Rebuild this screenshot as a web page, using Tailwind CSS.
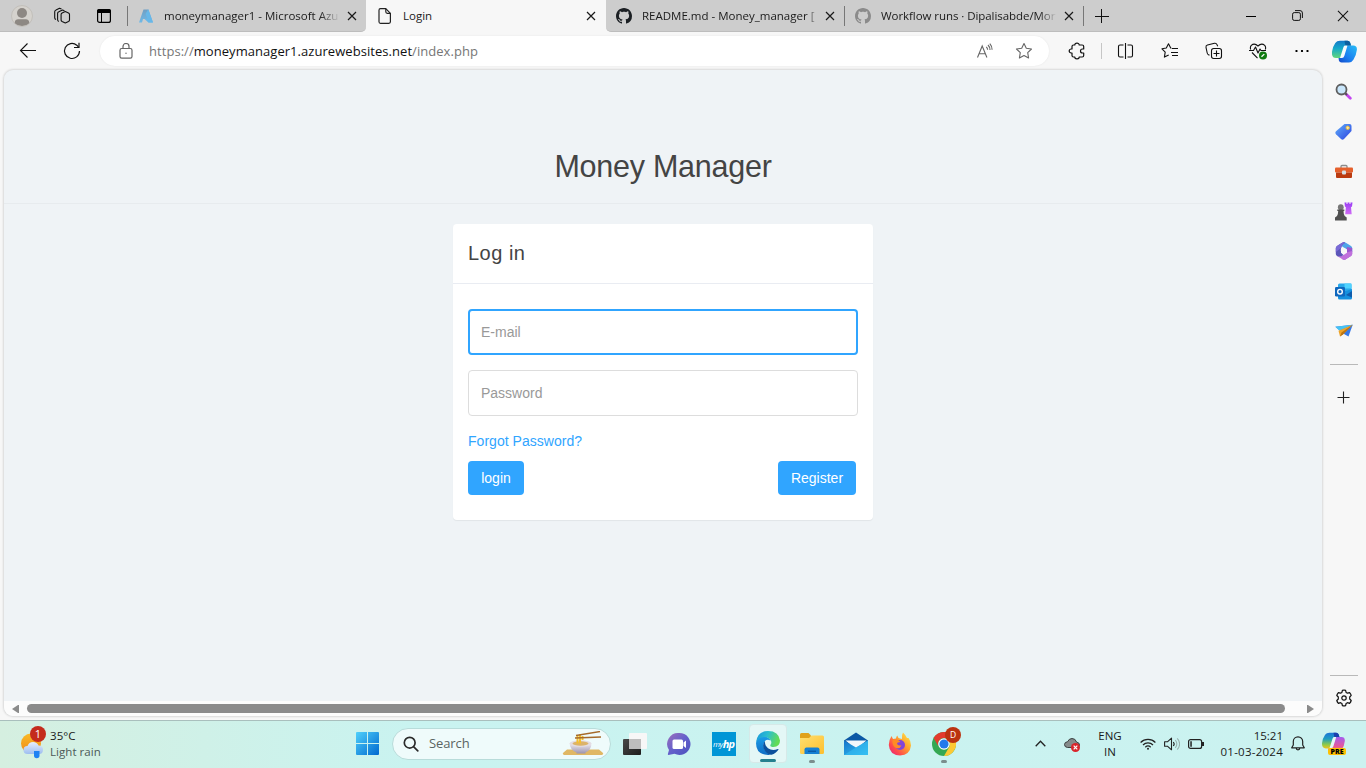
<!DOCTYPE html>
<html lang="en">
<head>
<meta charset="utf-8">
<title>Login</title>
<script src="https://cdn.jsdelivr.net/npm/@tailwindcss/browser@4"></script>
</head>
<body class="flex h-[768px] w-[1366px] flex-col overflow-hidden bg-[#f7f7f7] font-['Open_Sans','Noto_Sans',sans-serif] text-[#1a1a1a]">

<!-- Gradients shared by the icons -->
<svg class="absolute h-0 w-0" aria-hidden="true">
  <defs>
    <linearGradient id="azure" x1="0" y1="0" x2="0" y2="1"><stop offset="0" stop-color="#6f9fc4"/><stop offset="1" stop-color="#70b9e6"/></linearGradient>
    <linearGradient id="cpA" x1="0" y1="0" x2="0" y2="1"><stop offset="0" stop-color="#1478c8"/><stop offset=".45" stop-color="#15a9c9"/><stop offset="1" stop-color="#62d67c"/></linearGradient>
    <linearGradient id="cpB" x1="1" y1="0" x2="0" y2="1"><stop offset="0" stop-color="#28bdf6"/><stop offset=".6" stop-color="#1b7df0"/><stop offset="1" stop-color="#1249c8"/></linearGradient>
    <linearGradient id="pvA" x1="0" y1="0" x2="0" y2="1"><stop offset="0" stop-color="#1c73d8"/><stop offset=".4" stop-color="#1f9dc0"/><stop offset=".75" stop-color="#8cc94c"/><stop offset="1" stop-color="#f0c419"/></linearGradient>
    <linearGradient id="pvB" x1="0" y1="0" x2="0" y2="1"><stop offset="0" stop-color="#a45cf0"/><stop offset=".6" stop-color="#e6599b"/><stop offset="1" stop-color="#f79052"/></linearGradient>
    <linearGradient id="tag" x1="0" y1="0" x2="1" y2="1"><stop offset="0" stop-color="#62b0fa"/><stop offset="1" stop-color="#2b41e0"/></linearGradient>
    <linearGradient id="start" x1="0" y1="0" x2="1" y2="1"><stop offset="0" stop-color="#4fd0fb"/><stop offset="1" stop-color="#0068cf"/></linearGradient>
    <linearGradient id="chat" x1="0" y1="0" x2="1" y2="1"><stop offset="0" stop-color="#9d6fbc"/><stop offset=".5" stop-color="#6460cb"/><stop offset="1" stop-color="#4b50bd"/></linearGradient>
    <linearGradient id="edgeTop" x1="0" y1="0" x2="1" y2=".3"><stop offset="0" stop-color="#1793dd"/><stop offset=".5" stop-color="#2bbdd0"/><stop offset="1" stop-color="#63dc55"/></linearGradient>
    <linearGradient id="edgeLow" x1="0" y1="0" x2="0" y2="1"><stop offset="0" stop-color="#1b9de8"/><stop offset="1" stop-color="#0f6cc4"/></linearGradient>
    <linearGradient id="folder" x1="0" y1="0" x2="1" y2="1"><stop offset="0" stop-color="#ffdf71"/><stop offset="1" stop-color="#fdbf2d"/></linearGradient>
    <linearGradient id="mail" x1="0" y1="0" x2="1" y2="1"><stop offset="0" stop-color="#1573c9"/><stop offset="1" stop-color="#35c4f5"/></linearGradient>
    <linearGradient id="fox" x1="1" y1="0" x2="0" y2="1"><stop offset="0" stop-color="#fff24a"/><stop offset=".4" stop-color="#ffa32e"/><stop offset=".72" stop-color="#ff4a4c"/><stop offset="1" stop-color="#e01b87"/></linearGradient>
    <linearGradient id="sun" x1="0" y1="0" x2="0" y2="1"><stop offset="0" stop-color="#f9bb26"/><stop offset="1" stop-color="#ef8718"/></linearGradient>
    <linearGradient id="cloud" x1="0" y1="0" x2="0" y2="1"><stop offset="0" stop-color="#e6effd"/><stop offset="1" stop-color="#9dbdf0"/></linearGradient>
    <linearGradient id="dark" x1="0" y1="0" x2="1" y2="1"><stop offset="0" stop-color="#484848"/><stop offset="1" stop-color="#1d1d1d"/></linearGradient>
    <linearGradient id="purp" x1="0" y1="0" x2="0" y2="1"><stop offset="0" stop-color="#9b3df5"/><stop offset="1" stop-color="#d06cf4"/></linearGradient>
    <linearGradient id="bowl" x1="0" y1="0" x2="0" y2="1"><stop offset="0" stop-color="#f3f0f5"/><stop offset="1" stop-color="#9d93ad"/></linearGradient>
    <symbol id="cross" viewBox="0 0 10 10"><path d="M1 1l8 8M9 1l-8 8" fill="none" stroke="currentColor" stroke-width="1.2"/></symbol>
    <symbol id="github" viewBox="0 0 16 16"><path fill="currentColor" d="M8 0C3.58 0 0 3.58 0 8c0 3.54 2.29 6.53 5.47 7.59.4.07.55-.17.55-.38 0-.19-.01-.82-.01-1.49-2.01.37-2.53-.49-2.69-.94-.09-.23-.48-.94-.82-1.13-.28-.15-.68-.52-.01-.53.63-.01 1.08.58 1.23.82.72 1.21 1.87.87 2.33.66.07-.52.28-.87.51-1.07-1.78-.2-3.64-.89-3.64-3.95 0-.87.31-1.59.82-2.15-.08-.2-.36-1.02.08-2.12 0 0 .67-.21 2.2.82.64-.18 1.32-.27 2-.27s1.36.09 2 .27c1.53-1.04 2.2-.82 2.2-.82.44 1.1.16 1.92.08 2.12.51.56.82 1.27.82 2.15 0 3.07-1.87 3.75-3.65 3.95.29.25.54.73.54 1.48 0 1.07-.01 1.93-.01 2.2 0 .21.15.46.55.38A8.01 8.01 0 0 0 16 8c0-4.42-3.58-8-8-8z"/></symbol>
  </defs>
</svg>

<!-- Tab strip -->
<header class="flex h-8 shrink-0 bg-[#f7f7f7] text-[11.5px] leading-8">
  <div class="flex w-[366px] rounded-br-[5px] border-b border-[#bdbdbd] bg-[#cdcdcd]">
    <div class="flex w-11 items-center justify-center">
      <svg class="size-[22px]" viewBox="0 0 22 22"><circle cx="11" cy="11" r="10.5" fill="#d5d2cd" stroke="#c2bfba"/><circle cx="11" cy="8" r="5" fill="#8d8883"/><path d="M3.800 18.200c-.3-3 1.700-3.900 3.200-3.900h8c1.500 0 3.500.9 3.200 3.900a10.500 10.500 0 0 1-14.400 0z" fill="#8d8883"/></svg>
    </div>
    <div class="flex w-9 items-center justify-center">
      <svg class="size-[18px]" viewBox="0 0 18 18" fill="none" stroke="#111" stroke-width="1.1" stroke-linejoin="round"><path d="M12.300 4.500l3.200 1.500q1 .5 1 1.500v5.500q0 1-1 1.500l-3.200 1.500-3.200-1.500q-1-.5-1-1.500V7.500q0-1 1-1.500z"/><path d="M5.800 14.500q-1.200-.5-1.200-1.700V6.500q0-1.200 1.200-1.700L9.500 3l2 .8M3 12.500q-1.300-.5-1.300-1.800V4.800Q1.700 3.500 3 3l3.500-1.700 2 .8"/></svg>
    </div>
    <div class="flex w-12 items-center justify-center">
      <svg class="size-4" viewBox="0 0 16 16"><rect x="1.600" y="1.600" width="12.800" height="12.800" rx="2" fill="none" stroke="#000" stroke-width="1.200"/><path d="M1 5V3a2 2 0 0 1 2-2h10a2 2 0 0 1 2 2v2z"/><path d="M5.500 5v9" stroke="#000"/></svg>
    </div>
    <div class="mt-1.5 -ml-px h-5 w-px bg-[#777]"></div>
    <div class="flex w-[238px] items-center pl-2.5">
      <svg class="size-4" viewBox="0 0 16 16"><path d="M5.500 1.500h4.800L15 14.500h-4.500L9 11H5l-1 3.500H1z" fill="url(#azure)"/><path d="M10 1.500h.5L15 14.500h-4.600L6.500 11h3L7.500 6z" fill="#67b7e8"/></svg>
      <span class="ml-2.5 w-[176px] whitespace-nowrap mask-r-from-88% mask-r-to-100%">moneymanager1 - Microsoft Azu</span>
      <svg class="ml-[7px] size-2.5"><use href="#cross"/></svg>
    </div>
  </div>
  <div class="flex w-[240px] items-center rounded-t-[6px] bg-[#f7f7f7] pl-2.5">
    <svg class="ml-0.5 h-4 w-[14px]" viewBox="0 0 14 16" fill="none" stroke="#222" stroke-width="1.200" stroke-linejoin="round"><path d="M2.500.7h5.300L12.400 5.300v8.500q0 1.500-1.500 1.500H2.500Q1 15.300 1 13.800V2.200Q1 .7 2.500.7z"/><path d="M7.800.7v3.100q0 1.500 1.500 1.500h3.100"/></svg>
    <span class="ml-[11px] w-[182px]">Login</span>
    <svg class="ml-px size-2.5"><use href="#cross"/></svg>
  </div>
  <div class="flex flex-1 rounded-bl-[5px] border-b border-[#bdbdbd] bg-[#cdcdcd]">
    <div class="flex w-[239px] items-center pl-2.5">
      <svg class="size-4 text-[#1b1f23]"><use href="#github"/></svg>
      <span class="ml-2.5 w-[176px] whitespace-nowrap mask-r-from-94% mask-r-to-100%">README.md - Money_manager [</span>
      <svg class="ml-[7px] size-2.5"><use href="#cross"/></svg>
    </div>
    <div class="mt-1.5 -ml-px h-5 w-px bg-[#777]"></div>
    <div class="flex w-[238px] items-center pl-2.5">
      <svg class="size-4 text-[#8b8b8b]"><use href="#github"/></svg>
      <span class="ml-2.5 w-[176px] tracking-[-.06px] whitespace-nowrap mask-r-from-90% mask-r-to-100%">Workflow runs · Dipalisabde/Mor</span>
      <svg class="ml-[7px] size-2.5"><use href="#cross"/></svg>
    </div>
    <div class="mt-1.5 h-5 w-px bg-[#777]"></div>
    <div class="flex w-9 items-center justify-center">
      <svg class="size-[14px]" viewBox="0 0 14 14"><path d="M6.500 0v14M0 7.500h14" stroke="#111" stroke-width="1"/></svg>
    </div>
    <div class="ml-auto flex">
      <div class="flex w-[46px] items-center justify-center"><div class="mt-px h-px w-2.5 bg-black"></div></div>
      <div class="flex w-[46px] items-center justify-center"><svg class="size-[11px]" viewBox="0 0 11 11" fill="none" stroke="#111"><rect x=".6" y="2.600" width="7.800" height="7.800" rx="1.600"/><path d="M3 .6h5q2.400 0 2.400 2.400v5"/></svg></div>
      <div class="flex w-[46px] items-center justify-center"><svg class="size-[12px]" viewBox="0 0 10 10"><path d="M.8.8l8.400 8.400M9.200.8L.8 9.200" stroke="#111" stroke-width=".9"/></svg></div>
    </div>
  </div>
</header>

<!-- Toolbar -->
<nav class="flex h-[38px] shrink-0 items-center">
  <div class="flex w-14 justify-center"><svg class="size-[18px]" viewBox="0 0 18 18" fill="none" stroke="#111" stroke-width="1.100"><path d="M17 8.500H1.500M8.500 1.500l-7 7 7 7"/></svg></div>
  <div class="flex w-8 justify-center"><svg class="size-[18px]" viewBox="0 0 18 18" fill="none" stroke="#111" stroke-width="1.200"><path d="M16.500 9A7.500 7.500 0 1 1 13.800 3.200L15.500 5"/><path d="M16 .8V5.500h-5"/></svg></div>
  <div class="ml-3 flex h-[30px] w-[949px] items-center rounded-full bg-white pl-[18px] shadow-[0_0_2px_rgba(0,0,0,.08)]">
    <svg class="size-4" viewBox="0 0 16 16" fill="none" stroke="#666" stroke-width="1.200"><rect x="2" y="5.500" width="12" height="9.700" rx="1.700"/><path d="M5 5.500V3.500a3 3 0 0 1 6 0v2"/><circle cx="8" cy="10.300" r=".7" fill="#666" stroke="none"/></svg>
    <span class="ml-[15px] w-[827px] pt-px text-[13px] tracking-[.05px] text-[#767676]">https://<span class="text-[#111]">moneymanager1.azurewebsites.net</span>/index.php</span>
    <svg class="h-4 w-[18px]" viewBox="0 0 18 16" fill="none" stroke="#666" stroke-width="1.100"><path d="M1.500 14.500L6.200 3l4.700 11.500M3.200 10.700h6"/><path d="M10.300 3.800a4 4 0 0 1 1.300 3M12 2a6.500 6.500 0 0 1 2 5M13.800.7a9 9 0 0 1 2.300 6"/></svg>
    <svg class="ml-[21px] size-[18px]" viewBox="0 0 18 18" fill="none" stroke="#666" stroke-width="1.100" stroke-linejoin="round"><path d="M9 1.500l2.300 4.800 5.200.7-3.800 3.700.9 5.300L9 13.500 4.400 16l.9-5.300L1.500 7l5.200-.7z"/></svg>
  </div>
  <div class="ml-1.5 flex w-11 justify-center"><svg class="size-[18px]" viewBox="0 0 18 18" fill="none" stroke="#111" stroke-width="1.200" stroke-linejoin="round"><path d="M5.500 3h1.300a2.200 1.900 0 0 1 4.400 0h3q1.500 0 1.500 1.500V7h-1.200a2 2 0 0 0 0 4h1.200v2.500q0 1.500-1.500 1.500h-3a2.200 1.900 0 0 1-4.400 0H5.500Q4 15 4 13.500V11H3.200a2 2 0 0 1 0-4H4V4.500Q4 3 5.500 3z"/></svg></div>
  <div class="ml-0.5 h-4 w-px bg-[#c6c6c6]"></div>
  <div class="ml-0.5 flex w-11 justify-center"><svg class="size-[18px]" viewBox="0 0 18 18" fill="none" stroke="#111" stroke-width="1.100"><path d="M8.500 1v16M6.500 3H3Q1.500 3 1.500 4.600v8.800Q1.500 15 3 15h3.500M10.500 3H14q1.500 0 1.500 1.600v8.800q0 1.600-1.500 1.600h-3.500"/></svg></div>
  <div class="flex w-11 justify-center"><svg class="size-[18px]" viewBox="0 0 18 18" fill="none" stroke="#111" stroke-width="1.100" stroke-linejoin="round"><path d="M10.500 6.200L9.700 6 7.500 1.800 5.300 6 1 6.800l3.200 3.300-.8 5 4.300-2.200M11 6.500h6M10 10.500h7M11 13.500h6"/></svg></div>
  <div class="flex w-11 justify-center"><svg class="size-[18px]" viewBox="0 0 18 18" fill="none" stroke="#111" stroke-width="1.100" stroke-linejoin="round"><rect x="6.500" y="6.500" width="10" height="10" rx="2.200"/><path d="M11.500 8.500v6M8.500 11.500h6M4.500 13.300l-1-.5Q2.500 12.300 2.200 11L1 5.300Q.7 3.500 2.500 3l7-1.700q1.800-.3 2.500 1.300l.7 1.700"/></svg></div>
  <div class="flex w-11 justify-center"><svg class="size-[18px]" viewBox="0 0 18 18" fill="none" stroke="#111" stroke-width="1.100" stroke-linejoin="round"><path d="M1.700 7.500Q.8 5 2.300 3.300 5.500.5 9 4q3.500-3.500 6.700-.7Q17.200 5 16.300 7.500M3 10.500l5.500 5.700M0 8.500h4.500L6.500 5 9 11l2-4 1 1.500h5"/><circle cx="14" cy="13.500" r="4" fill="#0f7b10" stroke="none"/><path d="M12.500 14.800l2.800-2.700" stroke="#fff" stroke-width="1.300"/></svg></div>
  <div class="flex w-11 items-center justify-center"><svg class="h-0.5 w-[14px]" viewBox="0 0 14 2"><circle cx="1.500" cy="1" r="1.100"/><circle cx="7" cy="1" r="1.100"/><circle cx="12.500" cy="1" r="1.100"/></svg></div>
  <div class="flex w-[40px] justify-center"><svg class="h-[23px] w-[25px]" viewBox="0 0 25 23"><path d="M8 .7h7.500q2 0 2.700 2l.8 2.800h-2.500q-2 0-2.700 2l-2.700 8q-.8 2.500-3.300 2.500H4Q-.3 18-.1 12.500.5 7 3.300 3.100 4.800.7 8 .7z" fill="url(#cpA)"/><path d="M17 22.500H9.500q-2 0-2.600-2L6.500 18H8q2.300 0 3-2.300l2.600-8.200q.7-2 2.900-2h4.700q4 0 3.700 4.300-.6 5.700-3.500 10Q19.800 22.500 17 22.500z" fill="url(#cpB)"/><path d="M12.500.7h3q2 0 2.700 2l.8 2.800h-2.500q-2 0-2.700 2z" fill="#0c5f9f"/><path d="M11.500 7q.5-1.400 2-1.400h2L12.300 16q-.6 2-2.300 2H8z" fill="#f7fbfd"/></svg></div>
</nav>

<div class="flex h-[650px] shrink-0">
  <!-- Web page -->
  <main class="ml-1 flex h-[646px] w-[1318px] flex-col overflow-hidden rounded-[9px] bg-[#eff3f6] font-['Liberation_Sans',Arial,sans-serif] text-[#444] shadow-[0_0_2px_1px_rgba(0,0,0,.12)]">
    <div class="h-[631px] shrink-0">
      <h1 class="border-b border-[#e7ebee] pt-[79px] pb-[19px] text-center text-[30.500px] leading-[35px] tracking-[-.25px]">Money Manager</h1>
      <section class="mx-auto mt-5 h-[296px] w-[420px] rounded-[4px] bg-white shadow-[0_1px_1px_rgba(0,0,0,.06)]">
        <h2 class="h-[60px] border-b border-[#e9ecf2] px-[15px] text-[20px] leading-[58px] tracking-[.5px]">Log in</h2>
        <form class="px-[15px] pt-[25px] text-[14px]">
          <input type="text" placeholder="E-mail" class="block h-[46px] w-[390px] rounded-[4px] border-2 border-[#30a5ff] bg-white px-[11px] placeholder:text-[#999]">
          <input type="password" placeholder="Password" class="mt-[15px] block h-[46px] w-[390px] rounded-[4px] border border-[#ddd] bg-white px-3 placeholder:text-[#999]">
          <a class="mt-[15px] block leading-5 tracking-[.03px] text-[#30a5ff]">Forgot Password?</a>
          <div class="mt-2.5 flex justify-between pr-0.5 text-white">
            <button type="button" class="h-[34px] w-14 rounded-[4px] bg-[#30a5ff]">login</button>
            <button type="button" class="h-[34px] w-[78px] rounded-[4px] bg-[#30a5ff]">Register</button>
          </div>
        </form>
      </section>
    </div>
    <!-- Horizontal scrollbar -->
    <div class="flex h-[15px] items-center bg-[#fcfcfc] pl-2">
      <svg class="h-2 w-[7px]" viewBox="0 0 7 8"><path d="M0 4l6-4h1v8H6z" fill="#8b8b8b"/></svg>
      <div class="ml-2 h-[9px] w-[1258px] rounded-full bg-[#8b8b8b]"></div>
      <svg class="ml-[22px] h-2 w-[7px]" viewBox="0 0 7 8"><path d="M7 4L1 0H0v8h1z" fill="#8b8b8b"/></svg>
    </div>
  </main>

  <!-- Browser sidebar -->
  <aside class="flex w-[44px] flex-col items-center pt-px pr-0.5 pl-px">
    <div class="flex h-10 items-center"><svg class="size-[17px]" viewBox="0 0 17 17"><path d="M11 11l4.300 4.300" stroke="#c445f0" stroke-width="2.800" stroke-linecap="round"/><path d="M9.500 9.500l2.500 2.500" stroke="#555" stroke-width="2"/><circle cx="6.500" cy="6.500" r="5" fill="#c9e6fb" stroke="#5f5f5f" stroke-width="1.800"/></svg></div>
    <div class="flex h-10 items-center"><svg class="size-[17px]" viewBox="0 0 17 17"><path d="M9.500 1h5Q16.500 1 16.500 3v5L9 16q-1.500 1.300-3 0L1 11.200q-1.300-1.500 0-2.900z" fill="url(#tag)"/><circle cx="12.700" cy="4.800" r="1.700" fill="#ffe9a0" stroke="#e8b93c"/></svg></div>
    <div class="flex h-10 items-center"><svg class="h-[17px] w-[18px]" viewBox="0 0 18 17"><path d="M6 5V3.500Q6 2.500 7 2.500h4q1 0 1 1V5" fill="none" stroke="#8b8b8b" stroke-width="1.300"/><rect y="4.500" width="18" height="5" rx="1" fill="#e5602c"/><path d="M1 9.500h16V14q0 1-1 1H2q-1 0-1-1z" fill="#bb3b10"/><rect x="7" y="7.500" width="4" height="4" rx="1" fill="#d8dfe4"/></svg></div>
    <div class="flex h-10 items-center"><svg class="h-[19px] w-[19px]" viewBox="0 0 19 19"><path d="M10.500.5h2V2h1V.5h2V2h1V.5h2l-.5 4-1 .8.700 7h-6.500l.7-7-1-.8z" fill="url(#purp)"/><circle cx="6.800" cy="5.200" r="2.900" fill="#777"/><path d="M3.300 7.500h7v1.500H9.500q0 3 1.200 5l2 1.500v3H1v-3L3 14q1.200-2 1.200-5h-.9z" fill="#505050"/></svg></div>
    <div class="flex h-10 items-center"><svg class="size-[18px]" viewBox="0 0 18 18"><path d="M9 0Q10 0 16 4q1.200.8 1.200 2v4q-3-3-6.200-3L5 3z" fill="#4fa5ea"/><path d="M17.200 6v6q0 1.200-1.200 2l-6 3.700Q8 18 6.500 16.500q6-2.500 5-8.500l.5-3z" fill="#9b57d0"/><path d="M17.200 9v3q0 1.200-1.200 2l-6 3.700Q9 18 8 17.500L2 14q6 1 9-3.500z" fill="#c070dc"/><path d="M9 0Q8 0 2 4 .8 4.800.8 6v6q0 1.200 1.200 2 3 1.500 6.500-1Q5 11 6 6.500 7 2 10 1z" fill="#5c56b8"/><path d="M9 0Q8 0 2 4 .8 4.800.8 6v4L6 6q1-4 4-5z" fill="#7a6ad6"/><path d="M9 5.700l3 1.700v3.400l-3 1.700-3-1.700V7.400z" fill="#f7f7f7"/></svg></div>
    <div class="flex h-10 items-center"><svg class="h-[17px] w-[17px]" viewBox="0 0 17 17"><path d="M3 2q0-1.500 1.500-1.500h11Q16.500.5 16.500 2v7H3z" fill="#28a8ea"/><path d="M9.500.5h7v5h-7z" fill="#4fd3ff"/><path d="M3 8h8l6-2v9q0 1.500-1.500 1.500h-11Q3 16.500 3 15z" fill="#1490df"/><path d="M11 12l6-4v6.500z" fill="#0f5cab"/><rect y="4" width="10" height="9.500" rx="1.200" fill="#0f67bd"/><circle cx="5" cy="8.700" r="2.300" fill="none" stroke="#fff" stroke-width="1.400"/></svg></div>
    <div class="flex h-10 items-center"><svg class="h-[15px] w-[18px]" viewBox="0 0 18 15"><path d="M.3 2.800L17.700.8 13.500 12.500 9 10z" fill="#3478e8"/><path d="M.3 2.800L17.700.8 4.500 6.800z" fill="#45c3f4"/><path d="M17.700.8L3.500 6.800 5 12.500l3-2z" fill="#f1a427"/><path d="M17.700.8L6.500 8.500 5 12.500l3-2z" fill="#ba7414"/></svg></div>
    <div class="mt-[13px] h-px w-7 bg-[#b9b9b9]"></div>
    <svg class="mt-[26px] size-[13px]" viewBox="0 0 13 13"><path d="M6.500.5v12M.5 6.500h12" stroke="#222" stroke-width="1.100"/></svg>
    <div class="mt-auto h-px w-7 bg-[#b9b9b9]"></div>
    <svg class="mt-[13px] mb-[13px] size-[18px]" viewBox="0 0 18 18" fill="none" stroke="#111" stroke-width="1.200" stroke-linejoin="round"><circle cx="9" cy="9" r="2.200"/><path d="M7.400 1.300q1.600-.5 3.200 0l.5 2.100 1.400.8 2.100-.6q1.200 1.200 1.600 2.800L14.700 8v2l1.500 1.500q-.4 1.600-1.600 2.800l-2.100-.6-1.400.8-.5 2.200q-1.600.5-3.200 0l-.5-2.200-1.400-.8-2.100.6Q2.200 13.100 1.800 11.500L3.300 10V8L1.800 6.500Q2.200 4.900 3.400 3.700l2.100.5 1.400-.8z"/></svg>
  </aside>
</div>

<!-- Windows taskbar -->
<footer class="flex h-12 shrink-0 items-center border-t border-[#a9bfbd] bg-linear-to-r from-[#d5efe0] via-[#c9f3f0] via-30% to-[#cbf2f0] pb-0.5 text-[11.500px]">
  <div class="flex w-[345px] items-center pl-5">
    <div class="relative h-[30px] w-[26px]">
      <svg class="h-[30px] w-[26px]" viewBox="0 0 26 30"><circle cx="11" cy="14.500" r="10" fill="url(#sun)"/><path d="M7.500 25a4 4 0 0 1 0-8q1.500-4 5.500-4t5.500 3.500q4.500 0 4.500 4.300t-4 4.200z" fill="url(#cloud)"/><path d="M14 22h5.500v4.500a2.700 2.700 0 0 1-5.500 0z" fill="#1e82f3"/></svg>
      <span class="absolute -top-[3px] left-[10px] size-4 rounded-full bg-[#c42b1c] text-center text-[11px] leading-4 text-white">1</span>
    </div>
    <div class="ml-1 leading-4 tracking-[.05px]"><div>35°C</div><div class="text-[#4c5a58]">Light rain</div></div>
  </div>
  <div class="flex w-11 justify-center"><svg class="size-[23px]" viewBox="0 0 23 23"><path d="M0 1q0-1 1-1h10v11H0zM12 0h10q1 0 1 1v10H12zM0 12h11v11H1q-1 0-1-1zM12 12h11v10q0 1-1 1H12z" fill="url(#start)"/></svg></div>
  <div class="ml-[3px] flex h-[32px] w-[219px] items-center rounded-full border border-[#b8dcda] bg-[#effbfb] pl-2.5">
    <svg class="size-4" viewBox="0 0 16 16" fill="none" stroke="#2a2a2a" stroke-width="1.700" stroke-linecap="round"><circle cx="6.700" cy="6.700" r="5.400"/><path d="M10.800 10.800l4 4"/></svg>
    <span class="ml-2.5 w-[133px] text-[13px] tracking-[-.1px] text-[#5a6462]">Search</span>
    <svg class="h-[25px] w-[42px]" viewBox="0 0 42 25"><path d="M5 18.500h32l4 3.500q1 2-3 2H4q-4 0-3-2z" fill="#e0b764"/><path d="M7.500 12h22q0 7-6 9.500v1h-9v-1Q8 19 7.500 12z" fill="url(#bowl)"/><ellipse cx="18.500" cy="12.500" rx="11" ry="3.300" fill="#e4dde3"/><ellipse cx="18.500" cy="12.500" rx="8" ry="2.200" fill="#dcb36a"/><path d="M15.500 4.500v8M18 3.500v9M20.500 5v4" stroke="#f5bf2e" stroke-width="2"/><path d="M14 4.500l24-4M13 7l26-1" stroke="#a56a2b" stroke-width="1.400"/></svg>
  </div>
  <div class="ml-0.5 flex items-center">
    <div class="flex w-11 justify-center"><svg class="size-6" viewBox="0 0 24 24"><rect y="7" width="18" height="16" rx="1" fill="url(#dark)"/><rect x="6" y="1" width="18" height="16" rx="1" fill="#f7f7f7"/><path d="M6 7h12v10H6z" fill="#bdbdbd"/></svg></div>
    <div class="flex w-11 justify-center"><svg class="size-6" viewBox="0 0 24 24"><path d="M12.500 1a11 11 0 1 1-5 20.800L1.500 23q-1 0-.5-1.500L2 18A11 11 0 0 1 12.500 1z" fill="url(#chat)"/><rect x="5.500" y="7.500" width="10.500" height="9.500" rx="1.500" fill="#fff"/><path d="M16.500 10.500L19 8.500v7.500l-2.500-2z" fill="#fff"/></svg></div>
    <div class="flex w-[45px] justify-center"><div class="flex size-6 items-center justify-center bg-[#0096d6] text-white"><span class="pt-px text-[8px] italic tracking-[-.4px]">my</span><span class="text-[11px] leading-none font-bold italic tracking-[-1px]">hp</span></div></div>
    <div class="flex w-11 justify-center">
      <div class="relative flex h-[39px] w-[38px] items-start justify-center rounded-[4px] border border-[#d6e9e8] bg-[#e4f7f6] pt-1.5">
        <svg class="size-6" viewBox="0 0 24 24"><path d="M0 12Q1 5.500 7.500 5.500q5.500 0 7 4-3.500-1.500-5.500.5-3 4 0 9 2.500 3.500 5 4.800Q12.500 24 12 24 0 23.500 0 12z" fill="url(#edgeLow)"/><path d="M0 11.500Q1.200 0 12 0t12 9.500q0 6.500-6.500 6.500-4 0-3-2.300 1.500-1.700.3-4.200Q13 6 8.500 6 3 6 0 11.500z" fill="url(#edgeTop)"/><path d="M9 10Q5.500 14 8.500 19t7 4.700q4.500-1.200 7-5.200.3-.8-.7-.5-5.500 2.300-9.800-.8Q8.500 14.500 9 10z" fill="#0d509c"/></svg>
        <div class="absolute bottom-0 h-[3px] w-4 rounded-full bg-[#24808f]"></div>
      </div>
    </div>
    <div class="relative flex w-11 justify-center"><svg class="size-6" viewBox="0 0 24 24"><path d="M0 2.500Q0 1 1.500 1h7L11 3.500V8H0z" fill="#e0a11a"/><path d="M0 6h9l2.500-2.500h11Q24 3.500 24 5v15.500Q24 22 22.500 22h-21Q0 22 0 20.500z" fill="url(#folder)"/><path d="M4.500 22v-4.500q0-2 2-2h11q2 0 2 2V22z" fill="#1580d3"/><path d="M8 19.300h8" stroke="#0b5ba6" stroke-width="1.400"/></svg><div class="absolute -bottom-[7px] h-[3px] w-1.5 rounded-full bg-[#7b8e8d]"></div></div>
    <div class="flex w-11 justify-center"><svg class="size-6" viewBox="0 0 24 24"><path d="M0 8.500L12 .500l12 8V12H0z" fill="#0b58a5"/><path d="M1.500 8.500h21L12 17z" fill="#f3f7fb"/><path d="M0 8.500L12 15.500l12-7V23H0z" fill="url(#mail)"/><path d="M0 23l12-7.500L24 8.500V23z" fill="#35bdf2" opacity=".6"/></svg></div>
    <div class="flex w-11 justify-center"><svg class="size-6" viewBox="0 0 24 24"><path d="M15 .5q3 3 4 5.500l1.500 0q2.500 3 2.500 7.500Q22 23 12 23.500 1.500 23 .8 13 .8 8 3.500 4l1.500 3 3-.5Q8 4.500 9.500 3.500q0 3 4.500 3.500Q13.500 3 15 .5z" fill="url(#fox)"/><circle cx="12" cy="13" r="5" fill="#8245d8"/><path d="M4.500 8q4.500-2 8 2-3.500 0-3.500 2 1.500 2 4.500 1.500-1.500 3.500-5.500 2.500-4-2-3.500-8z" fill="#ff8b25"/></svg></div>
    <div class="relative flex w-11 justify-center">
      <svg class="size-6" viewBox="0 0 24 24"><circle cx="12" cy="12" r="12" fill="#34a853"/><path d="M1.600 6A12 12 0 0 1 22.400 6H12a6 6 0 0 0-5.200 9z" fill="#e33b2e"/><path d="M22.400 6A12 12 0 0 1 12 24l5.200-9A6 6 0 0 0 12 6z" fill="#fcc934"/><circle cx="12" cy="12" r="5.800" fill="#fff"/><circle cx="12" cy="12" r="4.600" fill="#2379ec"/></svg>
      <span class="absolute -top-[5px] left-[23px] size-4 rounded-full bg-[#bb3310] text-center text-[8.500px] leading-4 text-white">D</span>
      <div class="absolute -bottom-[7px] h-[3px] w-1.5 rounded-full bg-[#7b8e8d]"></div>
    </div>
  </div>
  <!-- System tray -->
  <div class="ml-auto flex items-center pr-[9px]">
    <div class="flex w-7 justify-center"><svg class="h-[7px] w-[11px]" viewBox="0 0 11 7" fill="none" stroke="#222" stroke-width="1.300"><path d="M.7 6.200l4.800-5 4.800 5"/></svg></div>
    <div class="flex w-9 justify-center"><svg class="size-4" viewBox="0 0 16 16"><path d="M3.500 11.500Q.5 11.200.5 8.500q.3-2.700 3-2.700Q5 2.500 8 2.500q3.500 0 4.500 3.500 3 .5 3 3t-3 2.500z" fill="#858b8b" stroke="#3c4141"/><circle cx="11.500" cy="11.500" r="4.500" fill="#d9252b"/><path d="M9.700 9.700l3.600 3.600M13.300 9.700l-3.600 3.600" stroke="#fff" stroke-width="1.200"/></svg></div>
    <div class="w-10 text-center leading-4"><div>ENG</div><div>IN</div></div>
    <div class="ml-1.5 flex w-6 justify-center"><svg class="h-3 w-4" viewBox="0 0 16 12" fill="none" stroke="#222" stroke-width="1.200"><path d="M.6 4.500a10.500 10.500 0 0 1 14.800 0M3 7a7 7 0 0 1 10 0M5.300 9.200a3.900 3.900 0 0 1 5.400 0"/><circle cx="8" cy="10.800" r="1" fill="#222" stroke="none"/></svg></div>
    <div class="flex w-6 justify-center"><svg class="h-[14px] w-4" viewBox="0 0 16 14" fill="none" stroke="#222" stroke-width="1.100" stroke-linejoin="round"><path d="M.6 4.800h2.800L7.500 1.200v11.600L3.400 9.200H.6zM9.300 5a3 3 0 0 1 0 4"/><path d="M11.300 3.200a5.500 5.500 0 0 1 0 7.600M13.200 1.300a8 8 0 0 1 0 11.400" stroke="#9bb0af"/></svg></div>
    <div class="flex w-6 justify-center"><svg class="h-2.5 w-4" viewBox="0 0 16 10"><rect x=".6" y=".6" width="13" height="8.800" rx="2" fill="none" stroke="#222" stroke-width="1.200"/><path d="M2.300 2.300h1.500v5.400H2.300zM14 3h2v4h-2z" fill="#222"/></svg></div>
    <div class="w-[75px] text-right leading-4 whitespace-nowrap"><div>15:21</div><div class="tracking-[.25px]">01-03-2024</div></div>
    <div class="flex w-[30px] justify-center"><svg class="h-[15px] w-[14px]" viewBox="0 0 14 15" fill="none" stroke="#222" stroke-width="1.200" stroke-linejoin="round"><path d="M.7 11.800L2.300 9V5.500a4.700 4.700 0 0 1 9.400 0V9l1.600 2.800zM5.200 12a1.800 1.800 0 0 0 3.600 0"/></svg></div>
    <div class="relative flex h-[23px] w-11 justify-center pr-1"><svg class="h-[21px] w-[23px]" viewBox="0 0 25 23"><path d="M8 .7h7.500q2 0 2.700 2l.8 2.800h-2.500q-2 0-2.700 2l-2.700 8q-.8 2.500-3.300 2.500H4Q-.3 18-.1 12.500.5 7 3.300 3.100 4.800.7 8 .7z" fill="url(#pvA)"/><path d="M17 22.500H9.500q-2 0-2.600-2L6.500 18H8q2.300 0 3-2.300l2.600-8.200q.7-2 2.900-2h4.700q4 0 3.700 4.300-.6 5.700-3.500 10Q19.800 22.500 17 22.500z" fill="url(#pvB)"/><path d="M12.500.7h3q2 0 2.700 2l.8 2.800h-2.500q-2 0-2.700 2z" fill="#1b3fae"/><path d="M11.500 7q.5-1.400 2-1.400h2L12.300 16q-.6 2-2.300 2H8z" fill="#e6f8f7"/></svg><span class="absolute top-[16px] left-[15px] h-[7px] w-[18px] rounded-[2px] bg-[#fdc003] text-center text-[7px] leading-[7px] font-extrabold text-black">PRE</span></div>
  </div>
</footer>
</body>
</html>
